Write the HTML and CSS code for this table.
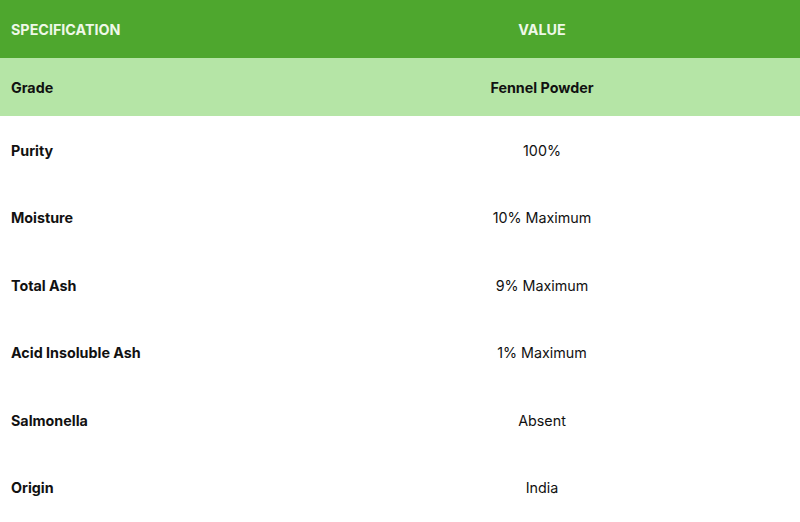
FILE: index.html
```html
<!DOCTYPE html>
<html>
<head>
<meta charset="utf-8">
<link rel="stylesheet" href="styles.css">
</head>
<body>
<table class="spec">
  <colgroup><col class="c1"><col class="c2"></colgroup>
  <thead>
    <tr class="head"><th class="lbl">SPECIFICATION</th><th class="val">VALUE</th></tr>
  </thead>
  <tbody>
    <tr class="hl"><td class="lbl">Grade</td><td class="val strong">Fennel Powder</td></tr>
    <tr><td class="lbl">Purity</td><td class="val">100%</td></tr>
    <tr><td class="lbl">Moisture</td><td class="val">10% Maximum</td></tr>
    <tr><td class="lbl">Total Ash</td><td class="val">9% Maximum</td></tr>
    <tr><td class="lbl">Acid Insoluble Ash</td><td class="val">1% Maximum</td></tr>
    <tr><td class="lbl">Salmonella</td><td class="val">Absent</td></tr>
    <tr><td class="lbl">Origin</td><td class="val">India</td></tr>
  </tbody>
</table>
</body>
</html>
```
FILE: styles.css
```css
html, body { margin: 0; padding: 0; background: #fff; }
body { font-family: Inter, "Noto Sans", sans-serif; font-size: 14.3px; color: #111; }
.spec { width: 800px; border-collapse: collapse; table-layout: fixed; }
.c1 { width: 284px; }
.spec th, .spec td { padding: 1px 11px 0; }
.head { background: #4ea72e; height: 58px; }
.head th { color: #eef8e8; font-weight: 700; font-size: 14.3px; }
.hl { background: #b5e5a6; height: 58px; }
tbody tr:not(.hl) { height: 67.5px; }
.lbl { text-align: left; font-weight: 700; }
.val { text-align: center; font-weight: 400; }
.val.strong { font-weight: 700; }
```
